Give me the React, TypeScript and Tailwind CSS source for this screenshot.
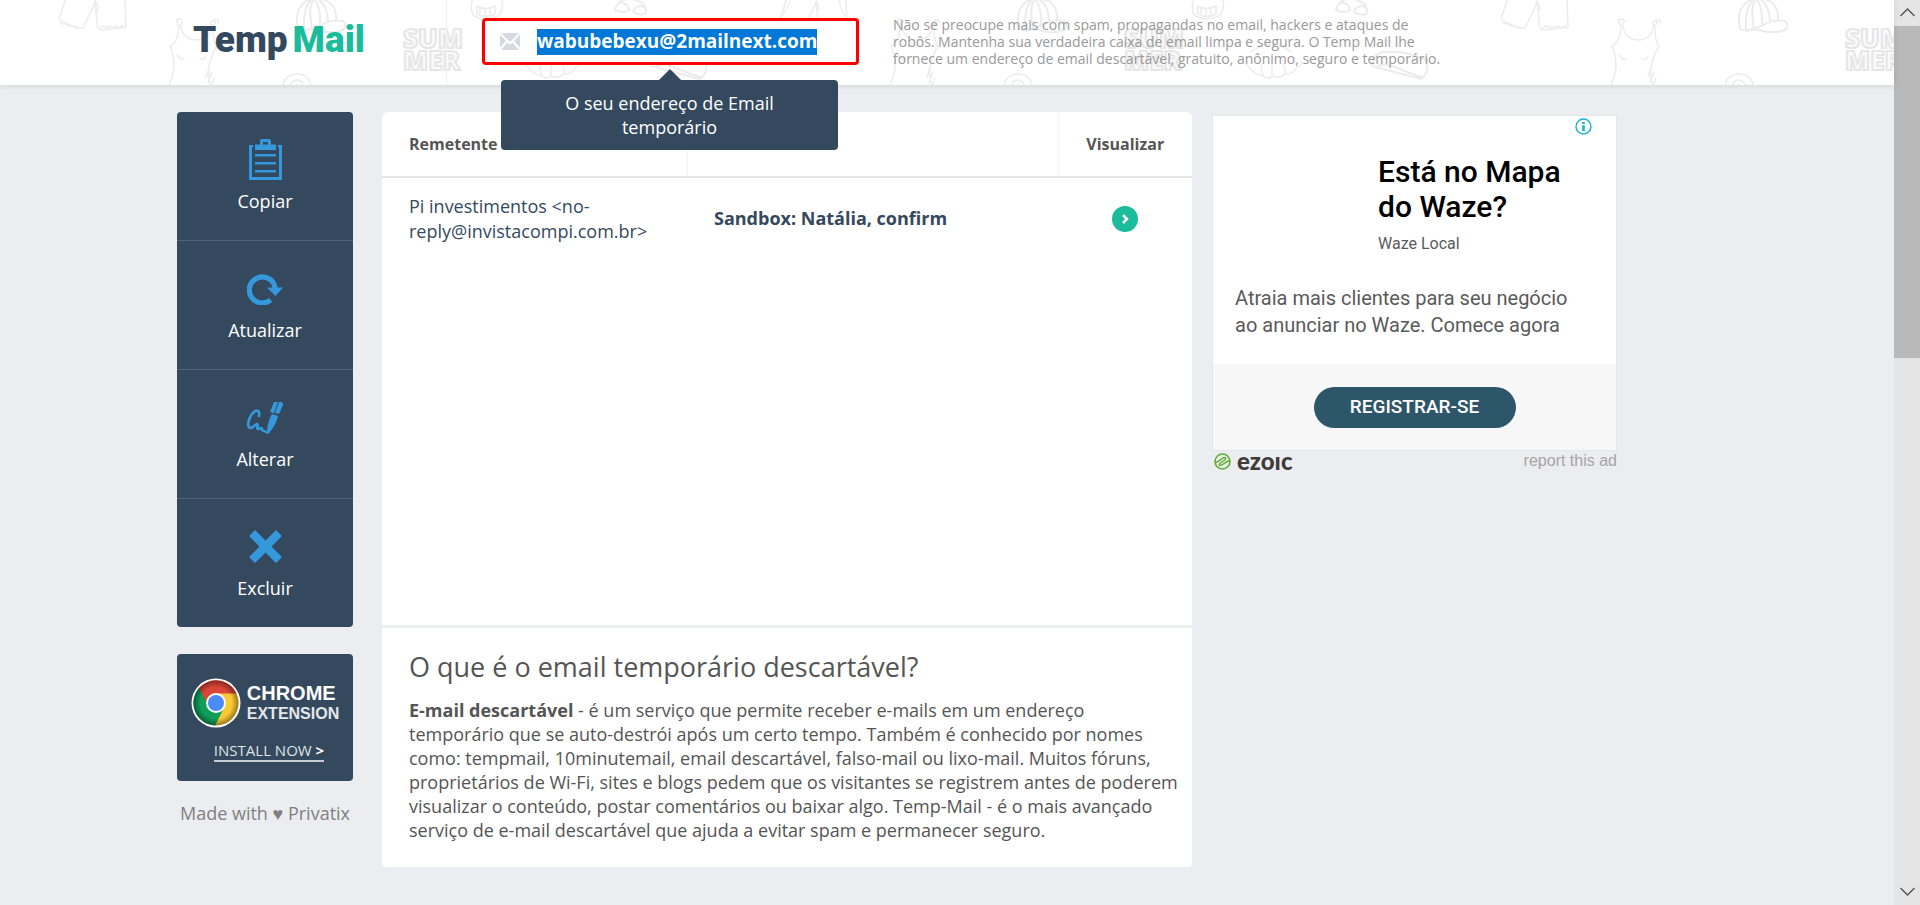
import React from "react";

function SummerTile({ x }: { x: number }) {
  return (
    <g transform={`translate(${x} 0)`} fill="none" stroke="#ececec" strokeWidth="1.5" strokeLinecap="round">
      {/* shorts */}
      <path d="M66 -2 L59 19 Q70 27 83 28 L95 3 M95 -2 L97 24 Q98 30 102 30 L126 27 L125 -2 M60 22 l3 2 3 0 3 2 4 0 3 2 4 0 M101 28 l3 -2 3 2 3 -2 3 2 3 -2 3 2 3 -2 3 2" />
      <path d="M98 10 Q97 -1 94 3" />
      {/* top */}
      <path d="M181 26 Q182 39 197 40 Q210 39 212 25 M178 22 q-4 -3 2 -3 q4 1 1 5 q-4 2 -4 -2 M213 21 q-5 2 -1 4 q5 0 2 -5 q5 -2 4 3 M179 26 Q178 43 170 46 Q178 66 170 82 L168 90 M213 27 Q213 42 217 46 Q205 66 210 82 L214 90 M177 55 q3 5 7 4 M200 59 q4 1 6 -2" />
      <path d="M209 68 l-3 9 M212 72 l-4 11 M214 78 l-3 9" />
      {/* flip flop */}
      <ellipse cx="297" cy="86" rx="14" ry="12" />
      <path d="M290 87 q2 -8 8 -7 q6 2 5 8 M297 84 v4" />
      {/* cap */}
      <path d="M298 29 Q294 10 305 2 Q317 -5 329 2 Q337 8 336 20 M298 29 Q304 33 319 26 Q331 19 343 21 Q348 25 343 30 Q333 34 321 31 Q312 28 305 31 M304 30 Q303 9 310 1 M312 28 Q308 9 313 0 M320 26 Q321 8 315 0 M328 22 Q328 6 318 -1" strokeWidth="2" />
      {/* bag */}
      <path d="M473 -2 Q469 10 474 16 Q486 22 498 16 Q505 8 501 -2 M477 14 v-8 q8 5 18 0 v8 q-9 5 -18 0 M480 8 v5 M485 10 v5 M490 10 v4" />
      {/* shell */}
      <path d="M526 64 Q532 75 542 76 Q546 80 551 76 Q559 79 564 74 Q573 74 576 67 Q581 66 581 62 M541 64 q-2 6 1 11 M551 65 v11 M562 64 q3 5 2 10 M530 52 q20 -16 40 0" />
      {/* shoe */}
      <path d="M651 66 Q652 54 662 52 Q684 50 706 60 Q708 74 700 79 Q684 75 651 66 M657 66 q8 -4 24 4 q9 4 19 7" strokeWidth="2" />
      {/* goggles */}
      <path d="M615 10 q2 -9 8 -7 q5 1 6 7 q-5 4 -14 0 M633 12 q2 -6 8 -6 q8 2 4 8 q-6 2 -12 -2 M619 2 q14 -8 26 4" strokeWidth="2" />
      {/* lettering */}
      <g fill="#fafafa" stroke="#e6e6e6" strokeWidth="2" strokeLinejoin="round" fontFamily="Open Sans, sans-serif" fontWeight="800" fontSize="26">
        <text x="403" y="48">SUM</text>
        <text x="403" y="70">MER</text>
      </g>
    </g>
  );
}

function HeaderPattern() {
  return (
    <svg aria-hidden="true" className="absolute inset-0 h-full w-full">
      <SummerTile x={0} />
      <SummerTile x={721} />
      <SummerTile x={1442} />
      <path d="M780 18 Q788 10 791 -2 M847 18 Q839 8 839 -2" fill="none" stroke="#ececed" />
      <path d="M446.500 0 V85" stroke="#f0f0f1" />
    </svg>
  );
}

function ClipboardIcon() {
  return (
    <svg width="33" height="41" viewBox="0 0 33 41" fill="#3498db" aria-hidden="true">
      <path d="M0 6H4V8.500H3V38H30V8.500H29V6H33V41H0Z" />
      <path d="M6 5.500H11V2Q11 0 13 0H20Q22 0 22 2V5.500H27V11H6ZM14 3V5.500H19V3Z" fillRule="evenodd" />
      <path d="M6 15H27V17.500H6ZM6 23H27V25.500H6ZM6 31H27V33.500H6Z" />
    </svg>
  );
}

function RefreshIcon() {
  return (
    <svg width="36" height="33" viewBox="0 0 38 33" aria-hidden="true">
      <path d="M25 28.500A13.700 13.700 0 1 1 29.700 16" fill="none" stroke="#3498db" strokeWidth="5.500" />
      <path d="M21 15.500H38L30 24.500Z" fill="#3498db" />
    </svg>
  );
}

function SignIcon() {
  return (
    <svg width="36" height="33" viewBox="0 0 36 33" aria-hidden="true">
      <path d="M12 15C13 9 9 8 5 13C1 18 0 26 3 27C7 27 8 23 10 23C12 23 9 28 11 28C13 28 14 26 15 28C15 30 16 29 19 31" fill="none" stroke="#3498db" strokeWidth="2.600" strokeLinecap="round" />
      <path d="M25 13L31 15C30 20 27 27 21 33H20C20 25 22 18 25 13Z" fill="#3498db" />
      <path d="M23 11L27 1H31L27 12ZM28 12L32 1Q36 0 36 4L32 13Z" fill="#3498db" />
      <path d="M25.500 12L29.500 1" stroke="#3498db" strokeWidth="1.500" />
    </svg>
  );
}

function CrossIcon() {
  return (
    <svg width="33" height="33" viewBox="0 0 33 33" aria-hidden="true">
      <path d="M6 0L16.500 10.500L27 0L33 6L22.500 16.500L33 27L27 33L16.500 22.500L6 33L0 27L10.500 16.500L0 6Z" fill="#3498db" />
    </svg>
  );
}

function ChromeLogo() {
  return (
    <svg width="50" height="50" viewBox="0 0 50 50" aria-hidden="true">
      <defs>
        <radialGradient id="rim" cx="50%" cy="50%" r="50%">
          <stop offset="70%" stopColor="#000" stopOpacity="0" />
          <stop offset="100%" stopColor="#000" stopOpacity="0.4" />
        </radialGradient>
      </defs>
      <circle cx="25" cy="25" r="24.500" fill="#fff" />
      <circle cx="25" cy="25" r="22.500" fill="#fcc934" />
      <path d="M8 10A22.500 22.500 0 0 0 24 47.500L33 30L25 25L15 15Z" fill="#0f9d58" />
      <path d="M8 10A22.500 22.500 0 0 1 45.500 15.500H25A9.500 9.500 0 0 0 15.500 24Z" fill="#db4437" />
      <circle cx="25" cy="25" r="22.500" fill="url(#rim)" />
      <circle cx="25" cy="25" r="10" fill="#fff" />
      <circle cx="25" cy="25" r="8" fill="#4c8bf5" />
    </svg>
  );
}

const actions = [
  { label: "Copiar", icon: <ClipboardIcon /> },
  { label: "Atualizar", icon: <RefreshIcon /> },
  { label: "Alterar", icon: <SignIcon /> },
  { label: "Excluir", icon: <CrossIcon /> },
];

function Header() {
  return (
    <header className="relative bg-white shadow-[0_1px_6px_rgba(0,0,0,0.1)]">
      <HeaderPattern />
      <div className="relative mx-auto flex h-[85px] max-w-[1540px] items-start">
        <a href="#" className="ml-4 flex w-[289px] gap-[5px] pt-[19px] font-['Roboto'] text-[37px] leading-[41px] font-black text-[#34495e]">
          <span>Temp</span>
          <span className="text-[#1abc9c]">Mail</span>
        </a>
        <div className="relative mt-[18px] flex h-[47px] w-[377px] items-center rounded-[4px] border-3 border-[#ff0000] bg-white pl-[15px]">
          <svg width="20" height="17" viewBox="0 0 20 17" aria-hidden="true">
            <path d="M1 0H19L10 9ZM0 1.500L6 8L0 14.500ZM20 1.500V14.500L14 8ZM1 17L7.500 9.500L10 12L12.500 9.500L19 17Z" fill="#d5dae0" />
          </svg>
          <input
            aria-label="O seu endereço de Email temporário"
            readOnly
            value="wabubebexu@2mailnext.com"
            className="ml-[17px] h-[26px] field-sizing-content bg-[#0078d7] text-[19px] font-bold text-white outline-none"
          />
          <div role="tooltip" className="absolute top-[59px] left-4 z-10 w-[337px] rounded-[4px] bg-[#34495e] px-10 py-[11px] text-center text-lg leading-6 text-white">
            <svg width="22" height="11" viewBox="0 0 22 11" aria-hidden="true" className="absolute -top-[11px] left-[158px]">
              <path d="M0 11L11 0L22 11Z" fill="#34495e" />
            </svg>
            O seu endereço de Email temporário
          </div>
        </div>
        <p className="mt-4 ml-[34px] w-[560px] text-sm leading-[17px] text-[#999]">
          Não se preocupe mais com spam, propagandas no email, hackers e ataques de
          <br />
          robôs. Mantenha sua verdadeira caixa de email limpa e segura. O Temp Mail lhe
          <br />
          fornece um endereço de email descartável, gratuito, anônimo, seguro e temporário.
        </p>
      </div>
    </header>
  );
}

function Sidebar() {
  return (
    <aside className="w-44 shrink-0">
      <nav className="flex flex-col overflow-hidden rounded-[4px] bg-[#34495e]">
        {actions.map((a) => (
          <button key={a.label} type="button" className="flex h-[129px] flex-col items-center border-t border-[#4d6379] pt-[27px] text-lg leading-6 text-white first:h-32 first:border-t-0">
            <span className="flex h-[41px] items-center">{a.icon}</span>
            <span className="mt-[9px]">{a.label}</span>
          </button>
        ))}
      </nav>
      <a href="#" className="mt-[27px] flex h-[127px] flex-col items-center rounded-[4px] bg-[#34495e] pt-6 font-['Liberation_Sans'] text-white">
        <span className="flex items-center gap-[6px]">
          <ChromeLogo />
          <span className="flex flex-col font-bold">
            <span className="text-xl leading-[22px]">CHROME</span>
            <span className="text-base leading-5 text-[#e3e7ea]">EXTENSION</span>
          </span>
        </span>
        <span className="mt-3 ml-2 border-b-2 border-[#c5ccd3] font-['Open_Sans'] text-[15px] leading-5 text-[#dfe3e7]">
          INSTALL NOW <b className="text-white">&gt;</b>
        </span>
      </a>
      <p className="mt-5 text-center text-lg leading-6 text-[#808080]">Made with ♥ Privatix</p>
    </aside>
  );
}

function Inbox() {
  return (
    <main className="min-w-0 flex-[0_1_810px]">
      <section className="min-h-[513px] rounded-t-[6px] bg-white">
        <table className="w-full table-fixed text-left">
          <thead className="text-base leading-6 text-[#555]">
            <tr className="h-[65px] border-b-2 border-[#e3e5e8]">
              <th className="w-[305px] border-r border-[#f3f4f5] pl-[27px] font-bold">Remetente</th>
              <th className="border-r border-[#f3f4f5] pl-[27px] font-bold">Assunto</th>
              <th className="w-[134px] text-center font-bold">Visualizar</th>
            </tr>
          </thead>
          <tbody className="text-lg leading-[25px] text-[#34495e]">
            <tr className="h-[82px]">
              <td className="pl-[27px]">
                Pi investimentos &lt;no-
                <br />
                reply@invistacompi.com.br&gt;
              </td>
              <td className="pl-[27px] font-bold">Sandbox: Natália, confirm</td>
              <td>
                <a href="#" aria-label="Visualizar" className="mx-auto flex size-[26px] items-center justify-center rounded-full bg-[#1abc9c]">
                  <svg width="8" height="10" viewBox="0 0 8 10" aria-hidden="true">
                    <path d="M2 1L6 5L2 9" fill="none" stroke="#fff" strokeWidth="2.500" />
                  </svg>
                </a>
              </td>
            </tr>
          </tbody>
        </table>
      </section>
      <section className="mt-[3px] rounded-b-[4px] bg-white pt-[21px] pr-2 pb-[25px] pl-[27px] text-[#555]">
        <h1 className="text-[27px] leading-9">O que é o email temporário descartável?</h1>
        <p className="mt-[13px] text-lg leading-6">
          <b>E-mail descartável</b> - é um serviço que permite receber e-mails em um endereço
          <br />
          temporário que se auto-destrói após um certo tempo. Também é conhecido por nomes
          <br />
          como: tempmail, 10minutemail, email descartável, falso-mail ou lixo-mail. Muitos fóruns,
          <br />
          proprietários de Wi-Fi, sites e blogs pedem que os visitantes se registrem antes de poderem
          <br />
          visualizar o conteúdo, postar comentários ou baixar algo. Temp-Mail - é o mais avançado
          <br />
          serviço de e-mail descartável que ajuda a evitar spam e permanecer seguro.
        </p>
      </section>
    </main>
  );
}

function Ad() {
  return (
    <aside className="mt-[3px] w-[405px] shrink-0 font-['Roboto']">
      <div className="border border-[#e4e6e9] bg-white">
        <div className="flex justify-end pt-[2px] pr-6">
          <svg width="17" height="17" viewBox="0 0 17 17" aria-label="Info">
            <circle cx="8.500" cy="8.500" r="7.500" fill="none" stroke="#17b3d6" strokeWidth="1.400" />
            <path d="M7.200 7.200H9.800V13H7.200ZM7.200 4H9.800V6H7.200Z" fill="#17b3d6" />
          </svg>
        </div>
        <div className="pt-[19px] pl-[165px]">
          <h2 className="text-[30px] leading-[35px] font-medium text-black">
            Está no Mapa
            <br />
            do Waze?
          </h2>
          <p className="mt-2 text-base leading-6 text-[#5a5a5a]">Waze Local</p>
        </div>
        <p className="mt-[29px] pl-[22px] text-xl leading-[27px] text-[#5a5a5a]">
          Atraia mais clientes para seu negócio
          <br />
          ao anunciar no Waze. Comece agora
        </p>
        <div className="mt-[25px] flex h-[86px] items-center justify-center bg-[#f7f7f7]">
          <button type="button" className="h-[41px] w-[202px] rounded-full bg-[#2d566a] text-[19px] font-medium text-white">
            REGISTRAR-SE
          </button>
        </div>
      </div>
      <div className="flex items-center justify-between">
        <span className="flex items-center gap-[6px] pl-[2px]">
          <svg width="17" height="17" viewBox="0 0 17 17" aria-hidden="true" fill="none" stroke="#5fae32">
            <circle cx="8.500" cy="8.500" r="7.500" strokeWidth="1.600" />
            <path d="M1.500 9.500C5 9 8 4.500 11 4.500Q13 5 10 7.500L7 9.500Q4 12 6 12.500C9 12.500 12 8 15.500 7.500" strokeWidth="1.300" />
          </svg>
          <span className="font-['Lato'] text-2xl leading-5 font-black text-[#403c39]">ezoıc</span>
        </span>
        <a href="#" className="font-['Liberation_Sans'] text-base leading-5 text-[#a5a5a5]">report this ad</a>
      </div>
    </aside>
  );
}

function Scrollbar() {
  return (
    <div aria-hidden="true" className="flex w-[26px] shrink-0 flex-col bg-[#e5e5e5]">
      <svg width="26" height="26" viewBox="0 0 26 26">
        <path d="M6.500 16L13.500 9L20.500 16" fill="none" stroke="#505050" strokeWidth="1.300" />
      </svg>
      <div className="h-[332px] bg-[#b9b9b9]" />
      <svg width="26" height="26" viewBox="0 0 26 26" className="mt-auto">
        <path d="M6.500 9L13.500 16L20.500 9" fill="none" stroke="#505050" strokeWidth="1.300" />
      </svg>
    </div>
  );
}

export default function App() {
  return (
    <div className="flex min-h-screen font-['Open_Sans',sans-serif]">
      <div className="min-w-0 flex-1 bg-[#ecedf1]">
        <Header />
        <div className="mx-auto mt-[27px] flex max-w-[1540px] items-start">
          <Sidebar />
          <div className="ml-[29px] flex min-w-0 flex-1 gap-5">
            <Inbox />
            <Ad />
          </div>
        </div>
      </div>
      <Scrollbar />
    </div>
  );
}
